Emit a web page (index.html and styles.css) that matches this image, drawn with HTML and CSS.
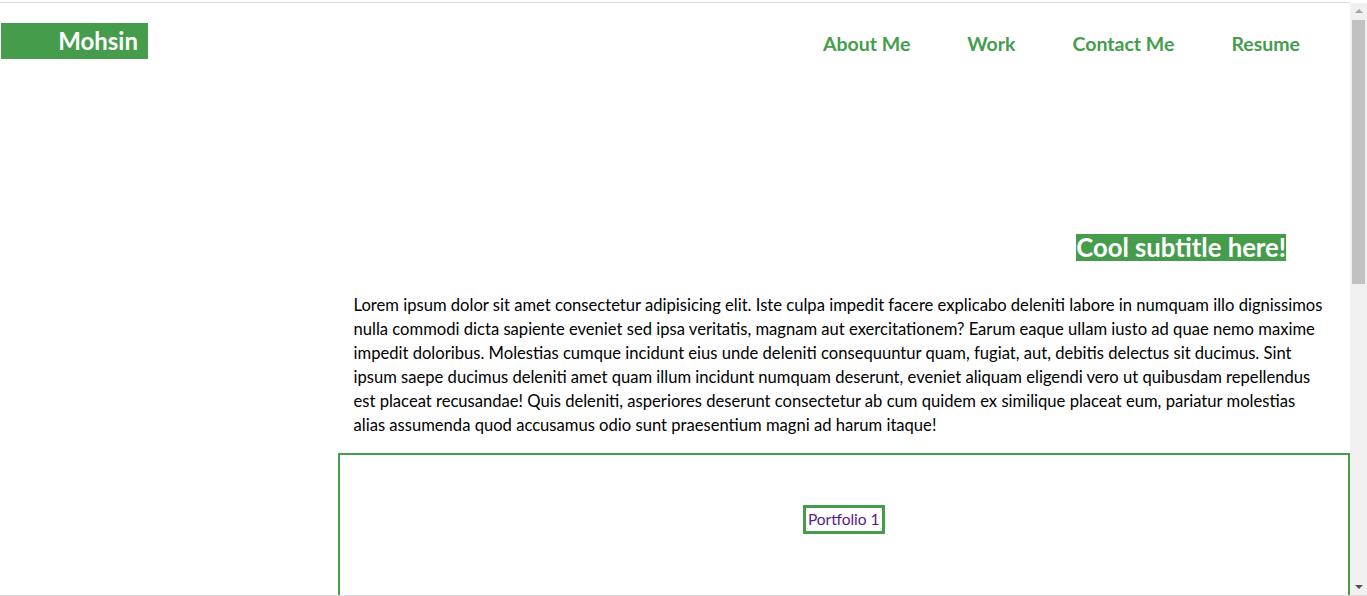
FILE: index.html
```html
<!DOCTYPE html>
<html lang="en">
<head>
<meta charset="utf-8">
<title>Mohsin</title>
<link rel="stylesheet" href="styles.css">
</head>
<body>
<div class="page">
  <header class="header">
    <div class="logo">Mohsin</div>
    <nav class="nav">
      <a class="nav-link" href="#about">About Me</a>
      <a class="nav-link" href="#work">Work</a>
      <a class="nav-link" href="#contact">Contact Me</a>
      <a class="nav-link" href="#resume">Resume</a>
    </nav>
  </header>
  <section class="hero">
    <h2 class="subtitle">Cool subtitle here!</h2>
  </section>
  <main class="main">
    <p class="intro">Lorem ipsum dolor sit amet consectetur adipisicing elit. Iste culpa impedit facere explicabo deleniti labore in numquam illo dignissimos nulla commodi dicta sapiente eveniet sed ipsa veritatis, magnam aut exercitationem? Earum eaque ullam iusto ad quae nemo maxime impedit doloribus. Molestias cumque incidunt eius unde deleniti consequuntur quam, fugiat, aut, debitis delectus sit ducimus. Sint ipsum saepe ducimus deleniti amet quam illum incidunt numquam deserunt, eveniet aliquam eligendi vero ut quibusdam repellendus est placeat recusandae! Quis deleniti, asperiores deserunt consectetur ab cum quidem ex similique placeat eum, pariatur molestias alias assumenda quod accusamus odio sunt praesentium magni ad harum itaque!</p>
    <section class="portfolio">
      <a class="portfolio-item" href="#p1">Portfolio 1</a>
    </section>
  </main>
</div>
<div class="scrollbar" aria-hidden="true">
  <span class="arrow arrow-up"></span>
  <span class="thumb"></span>
  <span class="arrow arrow-down"></span>
</div>
<div class="frame-bottom" aria-hidden="true"></div>
</body>
</html>
```

FILE: styles.css
```css
html, body {
  margin: 0;
  padding: 0;
}
body {
  font-family: "Lato", "Open Sans", sans-serif;
  background: #fff;
  color: #000;
  border-top: 1px solid #dcdcdc;
  margin-top: 2px;
  margin-right: 17px;
}
.page {
  display: flex;
  flex-direction: column;
}
.header {
  display: flex;
  justify-content: space-between;
  align-items: flex-start;
  padding-top: 20px;
}
.logo {
  margin-left: 1px;
  width: 137px;
  height: 36px;
  padding-right: 10px;
  background: #459d4c;
  color: #fff;
  font-weight: bold;
  font-size: 24px;
  line-height: 36px;
  text-align: right;
}
.nav {
  display: flex;
  gap: 57px;
  margin-right: 50px;
  padding-top: 10px;
}
.nav-link {
  color: #459d4c;
  font-weight: bold;
  font-size: 19.5px;
  line-height: 22px;
  text-decoration: none;
}
.hero {
  display: flex;
  justify-content: flex-end;
  padding-top: 175px;
  padding-right: 64px;
}
.subtitle {
  margin: 0;
  background: #459d4c;
  color: #fff;
  font-size: 25.7px;
  line-height: 27px;
  font-weight: bold;
}
.main {
  margin-left: 25%;
  padding-top: 32px;
}
.intro {
  margin: 0 0 16px;
  padding: 0 22px 0 16px;
  font-size: 16.6px;
  line-height: 24px;
}
.portfolio {
  border: 2px solid #459d4c;
  height: 300px;
  display: flex;
  justify-content: center;
  align-items: flex-start;
  padding-top: 50px;
}
.portfolio-item {
  border: 3px solid #459d4c;
  color: #551a8b;
  text-decoration: none;
  font-size: 15.5px;
  line-height: 23px;
  padding: 0 2px;
}
.scrollbar {
  position: fixed;
  top: 3px;
  right: 0;
  bottom: 1px;
  width: 17px;
  background: #f1f1f1;
  display: flex;
  flex-direction: column;
  align-items: center;
}
.arrow {
  width: 0;
  height: 0;
  border-left: 4px solid transparent;
  border-right: 4px solid transparent;
}
.arrow-up {
  margin-top: 6px;
  border-bottom: 4px solid #a3a3a3;
}
.arrow-down {
  margin-top: auto;
  margin-bottom: 6px;
  border-top: 4px solid #505050;
}
.thumb {
  margin-top: 7px;
  width: 13px;
  height: 264px;
  background: #c1c1c1;
}
.frame-bottom {
  position: fixed;
  left: 0;
  right: 0;
  bottom: 0;
  height: 1px;
  background: #dcdcdc;
}
```
